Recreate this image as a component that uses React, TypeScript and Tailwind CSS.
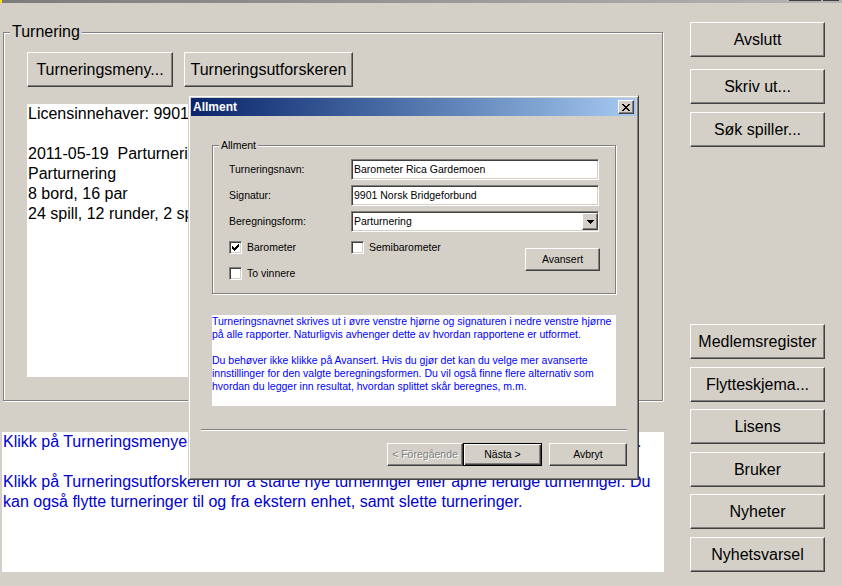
const raised =
  "border border-t-white border-l-white border-r-[#404040] border-b-[#404040] shadow-[inset_-1px_-1px_0_#808080] bg-[#d4d0c8]";
const sunken =
  "border border-t-[#808080] border-l-[#808080] border-r-white border-b-white shadow-[inset_1px_1px_0_#404040,inset_-1px_-1px_0_#d4d0c8]";
const etched = "border border-[#808080] shadow-[1px_1px_0_#fff,inset_1px_1px_0_#fff]";

function CheckMark() {
  return (
    <svg width="7" height="7" viewBox="0 0 7 7" shapeRendering="crispEdges">
      <rect x="0" y="2" width="1" height="3" fill="#000" />
      <rect x="1" y="3" width="1" height="3" fill="#000" />
      <rect x="2" y="4" width="1" height="3" fill="#000" />
      <rect x="3" y="3" width="1" height="3" fill="#000" />
      <rect x="4" y="2" width="1" height="3" fill="#000" />
      <rect x="5" y="1" width="1" height="3" fill="#000" />
      <rect x="6" y="0" width="1" height="3" fill="#000" />
    </svg>
  );
}

function Checkbox({ checked, label }: { checked?: boolean; label: string }) {
  return (
    <div className="flex h-[13px] items-center">
      <div className={`${sunken} flex h-[13px] w-[13px] items-center justify-center bg-white`}>
        {checked && <CheckMark />}
      </div>
      <span className="ml-[5px] whitespace-nowrap">{label}</span>
    </div>
  );
}

function Field({ label, children }: { label: string; children: React.ReactNode }) {
  return (
    <div className="flex h-[21px] items-center">
      <span className="w-[122px] whitespace-nowrap">{label}</span>
      {children}
    </div>
  );
}

export default function App() {
  return (
    <div className="relative h-[586px] w-[842px] overflow-hidden bg-[#d4d0c8] font-['Liberation_Sans',Arial,sans-serif] text-black">
      {/* bottom edge of the main title bar */}
      <div className="flex h-[3px] bg-linear-to-r from-[#7c7c7c] to-[#b4b4b4]">
        <div className="h-[3px] w-[2px] bg-[#ffe600]" />
        <div className="ml-[787px] h-[1px] w-[32px] bg-[#404040]" />
        <div className="ml-[2px] h-[1px] w-[16px] bg-[#404040]" />
      </div>

      <div className="flex">
        {/* Left column */}
        <div className="flex w-[664px] flex-col pl-[2px]">
          <div className={`relative ml-[1px] mt-[29px] h-[369px] w-[660px] ${etched}`}>
            <span className="absolute -top-[10px] left-[6px] bg-[#d4d0c8] px-[2px] text-[16px] leading-[18px]">
              Turnering
            </span>
            <div className="ml-[23px] mt-[19px] flex gap-[11px] text-[16px]">
              <button type="button" className={`${raised} h-[35px] w-[146px]`}>
                Turneringsmeny...
              </button>
              <button type="button" className={`${raised} h-[35px] w-[169px]`}>
                Turneringsutforskeren
              </button>
            </div>
            <div className="ml-[23px] mt-[17px] h-[273px] w-[609px] overflow-hidden bg-white pl-[1px] text-[16px] leading-[20px]">
              <div className="whitespace-pre">Licensinnehaver: 9901 Norsk Bridgeforbund</div>
              <div className="h-[20px]" />
              <div className="whitespace-pre">2011-05-19  Parturnering Barometer Rica Gardemoen</div>
              <div className="whitespace-pre">Parturnering</div>
              <div className="whitespace-pre">8 bord, 16 par</div>
              <div className="whitespace-pre">24 spill, 12 runder, 2 spill pr runde</div>
            </div>
          </div>

          <div className="mt-[31px] h-[140px] w-[662px] bg-white pl-[1px] text-[16px] leading-[20px] text-[#0000d0]">
            <div className="whitespace-nowrap">
              Klikk på Turneringsmenyen for å legge inn resultater og for å skrive ut listene og rapporter.
            </div>
            <div className="h-[20px]" />
            <div className="whitespace-nowrap">
              Klikk på Turneringsutforskeren for å starte nye turneringer eller åpne ferdige turneringer. Du
            </div>
            <div className="whitespace-nowrap">
              kan også flytte turneringer til og fra ekstern enhet, samt slette turneringer.
            </div>
          </div>
        </div>

        {/* Right column */}
        <div className="ml-[26px] flex w-[135px] flex-col text-[16px]">
          <button type="button" className={`${raised} mt-[19px] h-[35px]`}>Avslutt</button>
          <button type="button" className={`${raised} mt-[12px] h-[35px]`}>Skriv ut...</button>
          <button type="button" className={`${raised} mt-[8px] h-[35px]`}>Søk spiller...</button>
          <button type="button" className={`${raised} mt-[177px] h-[35px]`}>Medlemsregister</button>
          <button type="button" className={`${raised} mt-[8px] h-[35px]`}>Flytteskjema...</button>
          <button type="button" className={`${raised} mt-[7px] h-[35px]`}>Lisens</button>
          <button type="button" className={`${raised} mt-[8px] h-[35px]`}>Bruker</button>
          <button type="button" className={`${raised} mt-[7px] h-[35px]`}>Nyheter</button>
          <button type="button" className={`${raised} mt-[8px] h-[35px]`}>Nyhetsvarsel</button>
        </div>
      </div>

      {/* Allment dialog */}
      <div className="absolute left-[188px] top-[95px] flex h-[385px] w-[451px] flex-col border border-t-[#d4d0c8] border-l-[#d4d0c8] border-r-[#404040] border-b-[#404040] bg-[#d4d0c8] p-[2px] text-[10.5px] shadow-[inset_1px_1px_0_#fff,inset_-1px_-1px_0_#808080]">
        <div className="flex h-[18px] items-center justify-between bg-linear-to-r from-[#0a246a] to-[#a6caf0] pl-[2px] pr-[2px]">
          <span className="text-[12px] font-bold text-white">Allment</span>
          <button type="button" className={`${raised} flex h-[14px] w-[16px] items-center justify-center`}>
            <svg width="8" height="7" viewBox="0 0 8 7" shapeRendering="crispEdges">
              <path
                d="M0 0h2v1H0zM6 0h2v1H6zM1 1h2v1H1zM5 1h2v1H5zM2 2h4v1H2zM3 3h2v1H3zM2 4h4v1H2zM1 5h2v1H1zM5 5h2v1H5zM0 6h2v1H0zM6 6h2v1H6z"
                fill="#000"
              />
            </svg>
          </button>
        </div>

        <div className={`relative ml-[21px] mt-[29px] h-[149px] w-[404px] ${etched} pl-[16px] pr-[15px] pt-[13px]`}>
          <span className="absolute -top-[7px] left-[6px] bg-[#d4d0c8] px-[2px] leading-[13px]">Allment</span>
          <div className="flex flex-col gap-[5px]">
            <Field label="Turneringsnavn:">
              <div className={`${sunken} flex h-[21px] w-[248px] items-center bg-white pl-[2px]`}>
                Barometer Rica Gardemoen
              </div>
            </Field>
            <Field label="Signatur:">
              <div className={`${sunken} flex h-[21px] w-[248px] items-center bg-white pl-[2px]`}>
                9901 Norsk Bridgeforbund
              </div>
            </Field>
            <Field label="Beregningsform:">
              <div className={`${sunken} flex h-[21px] w-[248px] items-center bg-white pl-[2px]`}>
                <span className="flex-1">Parturnering</span>
                <div className={`${raised} flex h-[17px] w-[16px] items-center justify-center`}>
                  <svg width="7" height="4" viewBox="0 0 7 4" shapeRendering="crispEdges">
                    <path d="M0 0h7v1H0zM1 1h5v1H1zM2 2h3v1H2zM3 3h1v1H3z" fill="#000" />
                  </svg>
                </div>
              </div>
            </Field>
          </div>
          <div className="mt-[9px] flex">
            <div className="flex flex-col gap-[13px]">
              <div className="flex">
                <div className="w-[122px]">
                  <Checkbox checked label="Barometer" />
                </div>
                <Checkbox label="Semibarometer" />
              </div>
              <Checkbox label="To vinnere" />
            </div>
            <button type="button" className={`${raised} ml-auto mt-[7px] h-[23px] w-[75px]`}>
              Avansert
            </button>
          </div>
        </div>

        <div className="ml-[21px] mt-[21px] h-[91px] w-[404px] bg-white leading-[13px] text-[#0000ff]">
          <div className="whitespace-nowrap">
            Turneringsnavnet skrives ut i øvre venstre hjørne og signaturen i nedre venstre hjørne
          </div>
          <div className="whitespace-nowrap">
            på alle rapporter. Naturligvis avhenger dette av hvordan rapportene er utformet.
          </div>
          <div className="h-[13px]" />
          <div className="whitespace-nowrap">
            Du behøver ikke klikke på Avansert. Hvis du gjør det kan du velge mer avanserte
          </div>
          <div className="whitespace-nowrap">
            innstillinger for den valgte beregningsformen. Du vil også finne flere alternativ som
          </div>
          <div className="whitespace-nowrap">
            hvordan du legger inn resultat, hvordan splittet skår beregnes, m.m.
          </div>
        </div>

        <div className="ml-[10px] mt-[23px] h-[2px] w-[426px] border-t border-b border-t-[#808080] border-b-white" />

        <div className="mt-[12px] flex justify-end pr-[9px]">
          <button
            type="button"
            className={`${raised} h-[23px] w-[76px] text-[#808080] [text-shadow:1px_1px_0_#fff]`}
          >
            &lt; Föregående
          </button>
          <button
            type="button"
            className="h-[23px] w-[79px] border border-black bg-[#d4d0c8] shadow-[inset_1px_1px_0_#fff,inset_-1px_-1px_0_#404040,inset_-2px_-2px_0_#808080]"
          >
            Nästa &gt;
          </button>
          <button type="button" className={`${raised} ml-[7px] h-[23px] w-[78px]`}>
            Avbryt
          </button>
        </div>
      </div>
    </div>
  );
}
